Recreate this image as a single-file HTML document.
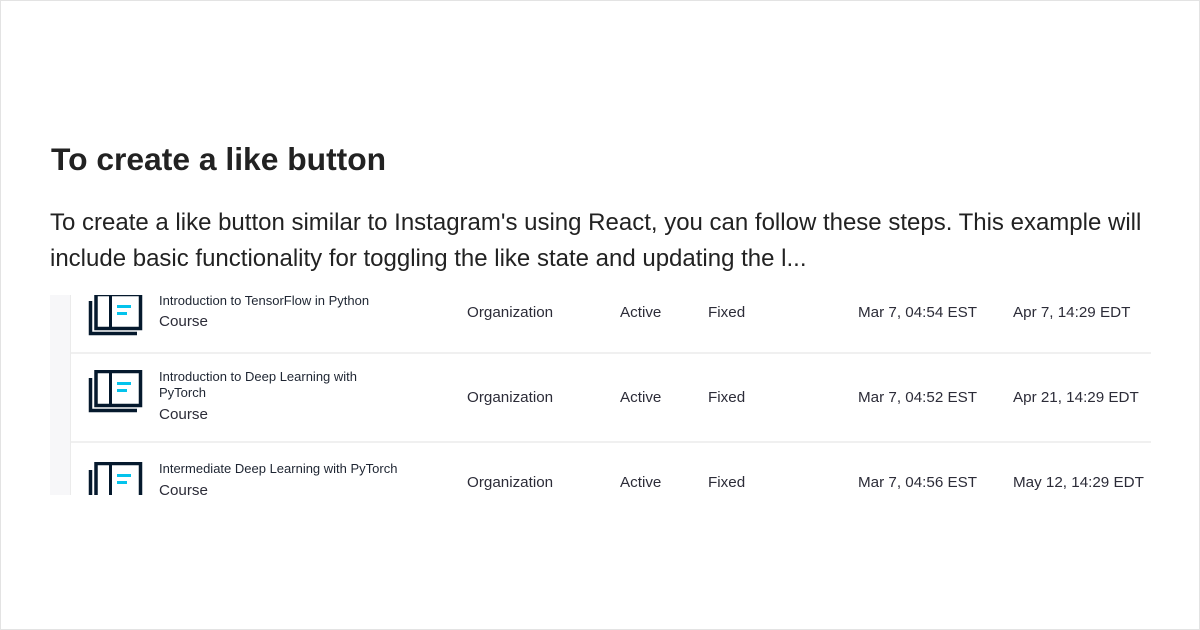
<!DOCTYPE html>
<html><head><style>
html,body{margin:0;padding:0;}
body{width:1200px;height:630px;position:relative;overflow:hidden;background:#fff;font-family:"Liberation Sans",sans-serif;}
.frame{position:absolute;left:0;top:0;width:1198px;height:628px;border:1px solid #e3e3e3;}
h1{position:absolute;left:51px;top:141px;margin:0;font-size:31.8px;font-weight:bold;color:#222;}
p{position:absolute;left:50px;top:205px;margin:0;width:1120px;font-size:24px;line-height:36px;color:#222;}
.tbl{position:absolute;left:50px;top:295px;width:1101px;height:200px;overflow:hidden;}
.strip{position:absolute;left:0;top:0;width:20px;height:200px;background:#f7f7f9;border-right:1px solid #ebebeb;}
.sep{position:absolute;left:21px;width:1080px;height:2px;background:#f0f0f0;}
.t{position:absolute;font-size:15.2px;color:#2c2c38;white-space:nowrap;}
.ti{position:absolute;font-size:13px;color:#1e2532;white-space:nowrap;line-height:16px;}
svg{position:absolute;}
</style></head><body>
<div class="frame"></div>
<h1>To create a like button</h1>
<p>To create a like button similar to Instagram's using React, you can follow these steps. This example will include basic functionality for toggling the like state and updating the l...</p>
<div class="tbl">
<div class="strip"></div>
<div class="sep" style="top:57px"></div>
<div class="sep" style="top:146px"></div>

<svg style="left:38px;top:-2px" width="56" height="44" viewBox="0 0 56 44"><path d="M2.5 8 V40.5 H49" fill="none" stroke="#05192d" stroke-width="3.5"/><rect x="8" y="1.5" width="44.5" height="34" fill="none" stroke="#05192d" stroke-width="3.5"/><rect x="21" y="2" width="3" height="33" fill="#05192d"/><rect x="29" y="12" width="14" height="3" fill="#03c3ec"/><rect x="29" y="19" width="10" height="3" fill="#03c3ec"/></svg>
<div class="ti" style="left:109px;top:-2px">Introduction to TensorFlow in Python</div>
<div class="t" style="left:109px;top:18px">Course</div>

<svg style="left:38px;top:75px" width="56" height="44" viewBox="0 0 56 44"><path d="M2.5 8 V40.5 H49" fill="none" stroke="#05192d" stroke-width="3.5"/><rect x="8" y="1.5" width="44.5" height="34" fill="none" stroke="#05192d" stroke-width="3.5"/><rect x="21" y="2" width="3" height="33" fill="#05192d"/><rect x="29" y="12" width="14" height="3" fill="#03c3ec"/><rect x="29" y="19" width="10" height="3" fill="#03c3ec"/></svg>
<div class="ti" style="left:109px;top:74px">Introduction to Deep Learning with<br>PyTorch</div>
<div class="t" style="left:109px;top:111px">Course</div>

<svg style="left:38px;top:167px" width="56" height="44" viewBox="0 0 56 44"><path d="M2.5 8 V40.5 H49" fill="none" stroke="#05192d" stroke-width="3.5"/><rect x="8" y="1.5" width="44.5" height="34" fill="none" stroke="#05192d" stroke-width="3.5"/><rect x="21" y="2" width="3" height="33" fill="#05192d"/><rect x="29" y="12" width="14" height="3" fill="#03c3ec"/><rect x="29" y="19" width="10" height="3" fill="#03c3ec"/></svg>
<div class="ti" style="left:109px;top:166px">Intermediate Deep Learning with PyTorch</div>
<div class="t" style="left:109px;top:187px">Course</div>

<div class="t" style="left:417px;top:9px">Organization</div><div class="t" style="left:570px;top:9px">Active</div><div class="t" style="left:658px;top:9px">Fixed</div><div class="t" style="left:808px;top:9px">Mar 7, 04:54 EST</div><div class="t" style="left:963px;top:9px">Apr 7, 14:29 EDT</div>
<div class="t" style="left:417px;top:94px">Organization</div><div class="t" style="left:570px;top:94px">Active</div><div class="t" style="left:658px;top:94px">Fixed</div><div class="t" style="left:808px;top:94px">Mar 7, 04:52 EST</div><div class="t" style="left:963px;top:94px">Apr 21, 14:29 EDT</div>
<div class="t" style="left:417px;top:179px">Organization</div><div class="t" style="left:570px;top:179px">Active</div><div class="t" style="left:658px;top:179px">Fixed</div><div class="t" style="left:808px;top:179px">Mar 7, 04:56 EST</div><div class="t" style="left:963px;top:179px">May 12, 14:29 EDT</div>
</div>
</body></html>
